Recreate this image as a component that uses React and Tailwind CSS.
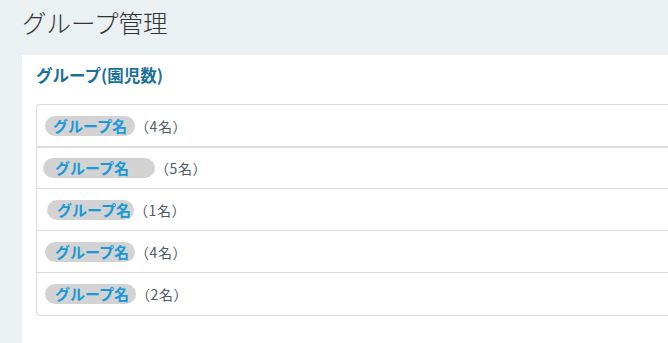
export default function App() {
  const rows = [
    { n: 4, pill: "ml-[8px] pl-[8px] pr-[8px]", h: "h-[43px]", border: "border-b-2" },
    { n: 5, pill: "ml-[6px] pl-[12px] pr-[26px]", h: "h-[41px]", border: "border-b" },
    { n: 1, pill: "ml-[10px] pl-[10px] pr-[3px]", h: "h-[42px]", border: "border-b" },
    { n: 4, pill: "ml-[8px] pl-[10px] pr-[6px]", h: "h-[42px]", border: "border-b" },
    { n: 2, pill: "ml-[8px] pl-[10px] pr-[7px]", h: "h-[42px]", border: "" },
  ];
  return (
    <div
      className="w-[668px] h-[343px] bg-[#ebf0f3] overflow-hidden flex flex-col"
      style={{ fontFamily: '"Noto Sans CJK JP", "Noto Sans", sans-serif' }}
    >
      <h1 className="h-[55px] pl-[22px] pt-[3px] text-[24.5px] font-light text-[#333] leading-[40px]">
        グループ管理
      </h1>
      <div className="ml-[22px] flex-1 bg-white pl-[14px] pt-[8px]">
        <h2 className="text-[16.5px] font-bold text-[#1c6f98] leading-[24px] h-[41px]">
          グループ(園児数)
        </h2>
        <div className="border border-r-0 border-[#dcdcdc] rounded-bl-[4px] rounded-tl-[4px]">
          {rows.map((r, i) => (
            <div
              key={i}
              className={`flex items-center ${r.h} ${r.border} border-[#dcdcdc]`}
            >
              <span
                className={`${r.pill} h-[20px] rounded-full bg-[#d3d3d3] text-[#1a99d8] font-bold text-[15px] leading-[20px]`}
              >
                グループ名
              </span>
              <span className="text-[14px] text-[#4f5866] leading-[20px] tracking-[0.5px]">（{r.n}名）</span>
            </div>
          ))}
        </div>
      </div>
    </div>
  );
}
